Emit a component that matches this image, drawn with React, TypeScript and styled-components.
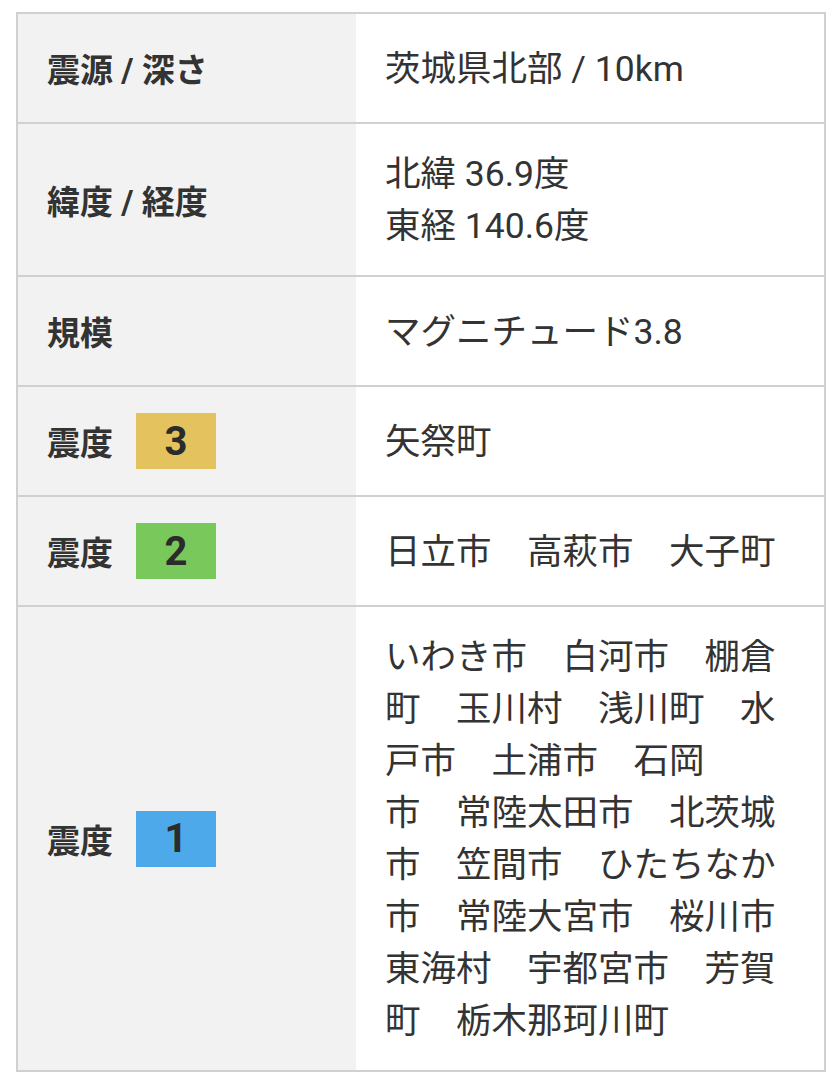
import styled, { createGlobalStyle } from 'styled-components';

const GlobalStyle = createGlobalStyle`
  html, body {
    margin: 0;
    padding: 0;
    background: #ffffff;
  }
  body {
    font-family: Roboto, "Noto Sans CJK JP", sans-serif;
    color: #333333;
  }
`;

type Level = 1 | 2 | 3;

interface InfoRow {
  label: string;
  level?: Level;
  lines: string[];
}

const LEVEL_COLOR: Record<Level, string> = {
  3: '#e4c25e',
  2: '#79c85b',
  1: '#4ea9ea',
};

const ROWS: InfoRow[] = [
  { label: '震源 / 深さ', lines: ['茨城県北部 / 10km'] },
  { label: '緯度 / 経度', lines: ['北緯 36.9度', '東経 140.6度'] },
  { label: '規模', lines: ['マグニチュード3.8'] },
  { label: '震度', level: 3, lines: ['矢祭町'] },
  { label: '震度', level: 2, lines: ['日立市　高萩市　大子町'] },
  {
    label: '震度',
    level: 1,
    lines: [
      'いわき市　白河市　棚倉',
      '町　玉川村　浅川町　水',
      '戸市　土浦市　石岡',
      '市　常陸太田市　北茨城',
      '市　笠間市　ひたちなか',
      '市　常陸大宮市　桜川市',
      '東海村　宇都宮市　芳賀',
      '町　栃木那珂川町',
    ],
  },
];

const Table = styled.div`
  margin: 12px 0 0 16px;
  width: 810px;
  border: 2px solid #d0d0d0;
  box-sizing: border-box;
  display: flex;
  flex-direction: column;
`;

const Row = styled.div`
  display: grid;
  grid-template-columns: 338px 1fr;
  min-height: 108px;
  border-top: 2px solid #d0d0d0;

  &:first-child {
    border-top: none;
  }
`;

const LabelCell = styled.div`
  background: #f2f2f2;
  display: flex;
  align-items: center;
  gap: 23px;
  padding: 0 29px;
  font-size: 33px;
  font-weight: 700;
  color: #333333;
`;

const ValueCell = styled.div`
  display: flex;
  flex-direction: column;
  justify-content: center;
  padding: 24px 29px 23px 29px;
  font-size: 35.5px;
  line-height: 52px;
  color: #333333;
`;

const Badge = styled.span<{ $level: Level }>`
  display: flex;
  align-items: center;
  justify-content: center;
  width: 80px;
  height: 56px;
  background: ${({ $level }) => LEVEL_COLOR[$level]};
  font-family: Roboto, "Liberation Sans", sans-serif;
  font-size: 40px;
  font-weight: 700;
  color: #2b2b2b;
`;

const Line = styled.div`
  white-space: nowrap;
`;

export default function App() {
  return (
    <>
      <GlobalStyle />
      <Table>
        {ROWS.map((row, i) => (
          <Row key={i}>
            <LabelCell>
              {row.label}
              {row.level && <Badge $level={row.level}>{row.level}</Badge>}
            </LabelCell>
            <ValueCell>
              {row.lines.map((line, j) => (
                <Line key={j}>{line}</Line>
              ))}
            </ValueCell>
          </Row>
        ))}
      </Table>
    </>
  );
}
